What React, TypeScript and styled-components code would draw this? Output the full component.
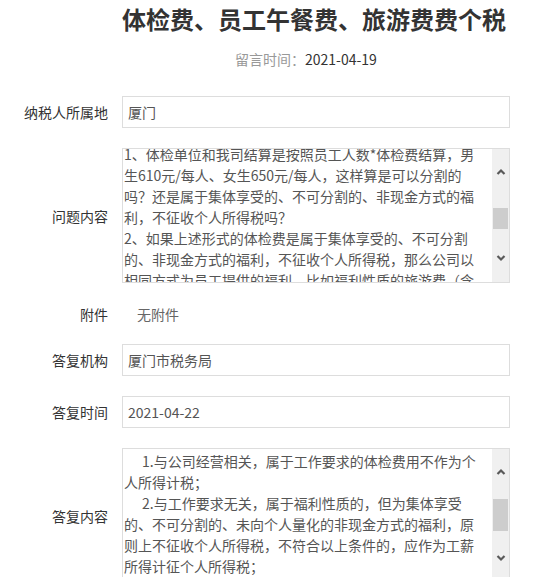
import React from 'react';
import styled, { createGlobalStyle } from 'styled-components';

const GlobalStyle = createGlobalStyle`
  html, body {
    margin: 0;
    padding: 0;
    background: #fff;
  }
  body {
    font-family: "Noto Sans CJK SC", "Noto Sans", sans-serif;
    color: #333;
  }
`;

const Page = styled.div`
  width: 540px;
  height: 577px;
  overflow: hidden;
`;

const Header = styled.div`
  padding-top: 1px;
`;

const Title = styled.h1`
  margin: 0;
  padding-left: 122px;
  font-size: 24px;
  line-height: 36px;
  font-weight: bold;
  color: #333;
  white-space: nowrap;
`;

const Meta = styled.div`
  margin-top: 12px;
  padding-left: 235px;
  font-size: 14px;
  line-height: 20px;
  color: #333;
`;

const MetaLabel = styled.span`
  color: #999;
`;

const Form = styled.div`
  margin-top: 27px;
  display: flex;
  flex-direction: column;
  gap: 20px;
`;

const Row = styled.div<{ $tight?: boolean }>`
  display: flex;
  align-items: center;
  min-height: ${(p) => (p.$tight ? '21px' : '32px')};
`;

const Label = styled.div`
  width: 122px;
  flex: none;
  box-sizing: border-box;
  padding-right: 14px;
  text-align: right;
  font-size: 14px;
  color: #333;
`;

const Input = styled.div`
  width: 388px;
  height: 32px;
  box-sizing: border-box;
  border: 1px solid #ddd;
  padding: 0 5px;
  font-size: 14px;
  line-height: 30px;
  color: #555;
`;

const Plain = styled.div`
  padding-left: 15px;
  font-size: 14px;
  color: #666;
`;

const ScrollBox = styled.div`
  width: 388px;
  height: 135px;
  box-sizing: border-box;
  border: 1px solid #ddd;
  display: flex;
`;

const Viewport = styled.div`
  flex: 1;
  min-width: 0;
  overflow: hidden;
  padding: 0 1px;
`;

const Content = styled.div<{ $offset: number }>`
  margin-top: ${(p) => p.$offset}px;
  font-size: 14px;
  line-height: 21px;
  color: #555;
`;

const Line = styled.div<{ $indent?: boolean }>`
  white-space: nowrap;
  text-indent: ${(p) => (p.$indent ? '18px' : '0')};
`;

const Scrollbar = styled.div`
  position: relative;
  width: 17px;
  flex: none;
  background: #f0f0f0;
  display: flex;
  flex-direction: column;
  justify-content: space-between;
  padding: 17px 0 18px;
  box-sizing: border-box;
`;

const ArrowBox = styled.div`
  height: 12px;
  display: flex;
  align-items: center;
  justify-content: center;
  color: #5a5a5a;
`;

const Thumb = styled.div`
  position: absolute;
  left: 1px;
  right: 1px;
  background: #cdcdcd;
`;

const Chevron = ({ up }: { up?: boolean }) => (
  <ArrowBox>
    <svg width="10" height="8" viewBox="0 0 10 8">
      <path
        d={up ? 'M1.5 6 L5 2.5 L8.5 6' : 'M1.5 2 L5 5.5 L8.5 2'}
        fill="none"
        stroke="currentColor"
        strokeWidth="2.2"
      />
    </svg>
  </ArrowBox>
);

const FakeScroll = ({ thumbTop, thumbHeight }: { thumbTop: number; thumbHeight: number }) => (
  <Scrollbar>
    <Chevron up />
    <Thumb style={{ top: thumbTop, height: thumbHeight }} />
    <Chevron />
  </Scrollbar>
);

const question = [
  '1、体检单位和我司结算是按照员工人数*体检费结算，男',
  '生610元/每人、女生650元/每人，这样算是可以分割的',
  '吗？还是属于集体享受的、不可分割的、非现金方式的福',
  '利，不征收个人所得税吗？',
  '2、如果上述形式的体检费是属于集体享受的、不可分割',
  '的、非现金方式的福利，不征收个人所得税，那么公司以',
  '相同方式为员工提供的福利，比如福利性质的旅游费（含',
];

const answer: { text: string; indent?: boolean }[] = [
  { text: '1.与公司经营相关，属于工作要求的体检费用不作为个', indent: true },
  { text: '人所得计税；' },
  { text: '2.与工作要求无关，属于福利性质的，但为集体享受', indent: true },
  { text: '的、不可分割的、未向个人量化的非现金方式的福利，原' },
  { text: '则上不征收个人所得税，不符合以上条件的，应作为工薪' },
  { text: '所得计征个人所得税；' },
];

export default function App() {
  return (
    <Page>
      <GlobalStyle />
      <Header>
        <Title>体检费、员工午餐费、旅游费费个税</Title>
        <Meta>
          <MetaLabel>留言时间：</MetaLabel>2021-04-19
        </Meta>
      </Header>
      <Form>
        <Row>
          <Label>纳税人所属地</Label>
          <Input>厦门</Input>
        </Row>
        <Row>
          <Label>问题内容</Label>
          <ScrollBox>
            <Viewport>
              <Content $offset={-5.5}>
                {question.map((l, i) => (
                  <Line key={i}>{l}</Line>
                ))}
              </Content>
            </Viewport>
            <FakeScroll thumbTop={59} thumbHeight={21} />
          </ScrollBox>
        </Row>
        <Row $tight>
          <Label>附件</Label>
          <Plain>无附件</Plain>
        </Row>
        <Row>
          <Label>答复机构</Label>
          <Input>厦门市税务局</Input>
        </Row>
        <Row>
          <Label>答复时间</Label>
          <Input>2021-04-22</Input>
        </Row>
        <Row>
          <Label>答复内容</Label>
          <ScrollBox>
            <Viewport>
              <Content $offset={1.5}>
                {answer.map((l, i) => (
                  <Line key={i} $indent={l.indent}>
                    {l.text}
                  </Line>
                ))}
              </Content>
            </Viewport>
            <FakeScroll thumbTop={50} thumbHeight={32} />
          </ScrollBox>
        </Row>
      </Form>
    </Page>
  );
}
